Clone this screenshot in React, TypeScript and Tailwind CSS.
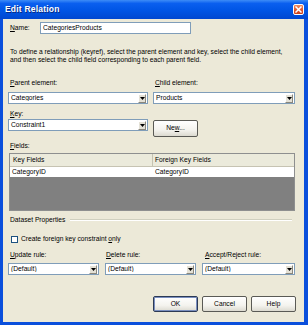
import React from 'react'

function U({ children }: { children: React.ReactNode }) {
  return <span className="underline underline-offset-1">{children}</span>
}

function Combo({ value, className = '' }: { value: string; className?: string }) {
  return (
    <div className={`h-[12px] bg-white border border-[#7f9db9] flex items-center ${className}`}>
      <span className="flex-1 pl-[2px] truncate leading-none">{value}</span>
      <div className="w-[8px] h-[9px] mr-[1px] bg-[#e4e1d6] border-r border-b border-[#8a877c] border-l border-t border-l-white border-t-white flex items-center justify-center">
        <svg width="5" height="3" viewBox="0 0 5 3">
          <path d="M0 0h5L2.5 3z" fill="#000" />
        </svg>
      </div>
    </div>
  )
}

function Btn({ label, className = '', isDefault = false }: { label: React.ReactNode; className?: string; isDefault?: boolean }) {
  return (
    <div
      className={`h-[16px] w-[45px] rounded-[2px] border flex items-center justify-center bg-[linear-gradient(to_bottom,#ffffff,#f4f3ee_60%,#dcdad0)] ${
        isDefault ? 'border-[#2c3a55] shadow-[inset_0_0_0_1px_#7a8fbf]' : 'border-[#5a5a55]'
      } ${className}`}
    >
      {label}
    </div>
  )
}

export default function App() {
  return (
    <div className="w-[308px] h-[325px] flex flex-col bg-[#0a4fdc] font-['Liberation_Sans',sans-serif] text-[6.7px] text-black overflow-hidden">
      {/* Title bar */}
      <div className="h-[19px] shrink-0 flex items-center justify-between pl-[5px] pr-[4px] bg-[linear-gradient(to_bottom,#3d8cf7,#0a5fef_18%,#0055e5_55%,#0047d0)]">
        <span className="text-white font-bold text-[8.5px] tracking-[0.2px] [text-shadow:1px_1px_0_#0a2a80]">Edit Relation</span>
        <div className="w-[11px] h-[11px] rounded-[2px] border border-white bg-[linear-gradient(to_bottom,#f08a5e,#e0532a_60%,#c94019)] flex items-center justify-center">
          <svg width="7" height="7" viewBox="0 0 7 7">
            <path d="M1 1l5 5M6 1L1 6" stroke="#fff" strokeWidth="1.5" strokeLinecap="square" />
          </svg>
        </div>
      </div>

      {/* Body */}
      <div className="flex-1 ml-[3px] mr-[4px] mb-[3px] bg-[#ece9d8] flex flex-col pl-[5px] pr-[9px] pt-[3px]">
        {/* Name */}
        <div className="flex items-center h-[12px]">
          <span className="w-[32px] pl-[2px]">
            <U>N</U>ame:
          </span>
          <div className="w-[151px] h-[12px] bg-white border border-[#7f9db9] flex items-center pl-[2px]">CategoriesProducts</div>
        </div>

        {/* Description */}
        <div className="mt-[14px] pl-[2px] leading-[7.5px] whitespace-nowrap">
          To define a relationship (keyref), select the parent element and key, select the child element,
          <br />
          and then select the child field corresponding to each parent field.
        </div>

        {/* Parent / Child */}
        <div className="mt-[16px] flex gap-[5px]">
          <div className="w-[140px] flex flex-col">
            <span className="pl-[2px] leading-[8px]">
              <U>P</U>arent element:
            </span>
            <Combo value="Categories" className="mt-[5px]" />
          </div>
          <div className="flex-1 flex flex-col">
            <span className="pl-[2px] leading-[8px]">
              <U>C</U>hild element:
            </span>
            <Combo value="Products" className="mt-[5px]" />
          </div>
        </div>

        {/* Key */}
        <div className="mt-[6px] flex flex-col">
          <span className="pl-[2px] leading-[8px]">
            <U>K</U>ey:
          </span>
          <div className="flex gap-[5px] items-start mt-[1px]">
            <Combo value="Constraint1" className="w-[140px]" />
            <Btn label={<span>Ne<U>w</U>...</span>} className="w-[44px] h-[17px] mt-[1px]" />
          </div>
        </div>

        {/* Fields */}
        <span className="mt-[5px] pl-[2px] leading-[8px]">
          <U>F</U>ields:
        </span>
        <div className="mt-[3px] ml-[1px] h-[58px] border border-[#8e8f8f] flex flex-col bg-[#808080]">
          <div className="h-[13px] flex bg-[#ebeadb] border-b border-[#c6c3b2]">
            <div className="w-[143px] border-r border-[#c6c3b2] pl-[3px] flex items-center">Key Fields</div>
            <div className="flex-1 pl-[2px] flex items-center">Foreign Key Fields</div>
          </div>
          <div className="h-[10px] flex bg-white">
            <div className="w-[143px] pl-[2px] flex items-center">CategoryID</div>
            <div className="flex-1 pl-[2px] flex items-center">CategoryID</div>
          </div>
        </div>

        {/* Dataset Properties */}
        <div className="mt-[5px] flex items-center pr-[3px]">
          <span className="pl-[2px] leading-[8px]">Dataset Properties</span>
          <div className="flex-1 ml-[5px] h-[2px] border-t border-[#d0d0bf] border-b border-b-white" />
        </div>

        {/* Checkbox */}
        <div className="mt-[11px] flex items-center pl-[3px]">
          <div className="w-[7px] h-[7px] bg-white border border-[#1c5180]" />
          <span className="ml-[3px] leading-[8px]">
            Create foreign key constraint <U>o</U>nly
          </span>
        </div>

        {/* Rules */}
        <div className="mt-[8px] flex gap-[6px]">
          <div className="w-[91px] flex flex-col">
            <span className="pl-[2px] leading-[8px]">
              <U>U</U>pdate rule:
            </span>
            <Combo value="(Default)" className="mt-[4px]" />
          </div>
          <div className="w-[91px] flex flex-col">
            <span className="pl-[1px] leading-[8px]">
              <U>D</U>elete rule:
            </span>
            <Combo value="(Default)" className="mt-[4px]" />
          </div>
          <div className="flex-1 flex flex-col">
            <span className="pl-[3px] leading-[8px]">
              <U>A</U>ccept/Reject rule:
            </span>
            <Combo value="(Default)" className="mt-[4px]" />
          </div>
        </div>

        {/* Buttons */}
        <div className="mt-[21px] flex justify-end gap-[4px] -mr-[1px]">
          <Btn label="OK" isDefault />
          <Btn label="Cancel" />
          <Btn label="Help" className="w-[44px]" />
        </div>
      </div>
    </div>
  )
}
